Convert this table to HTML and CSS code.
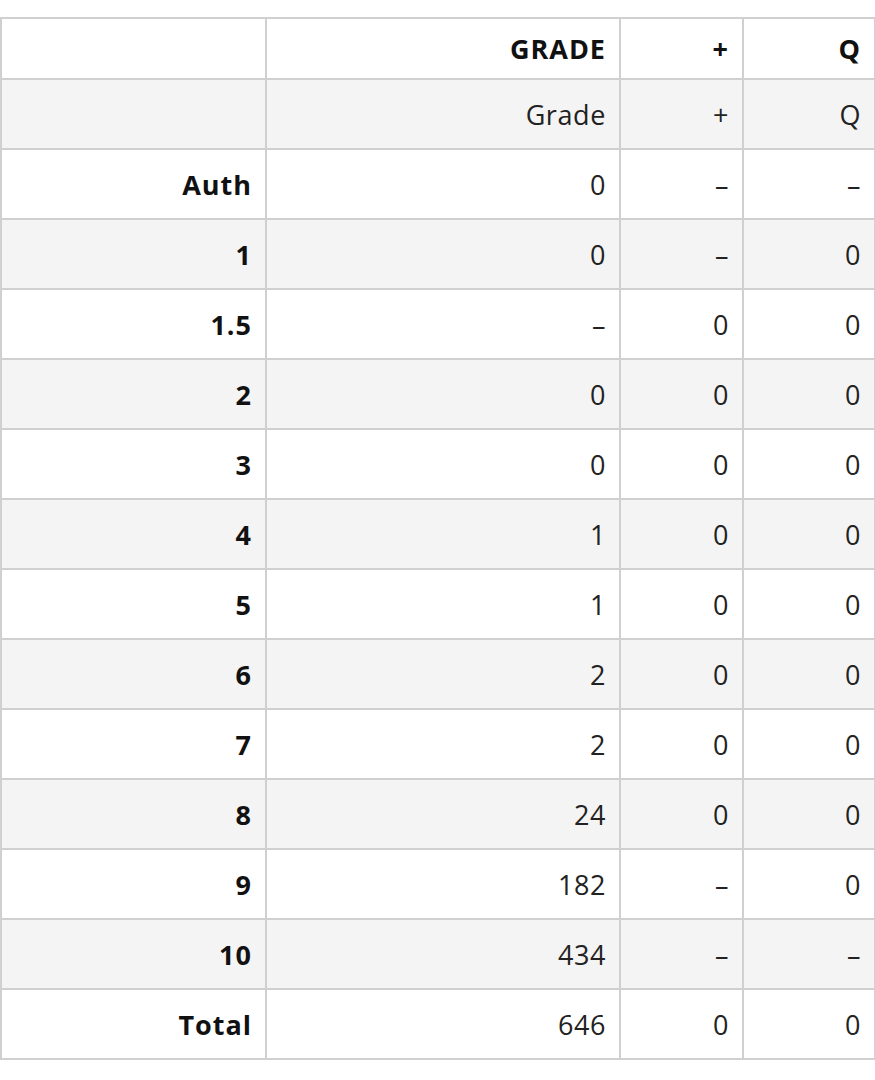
FILE: index.html
```html
<!DOCTYPE html>
<html>
<head>
<meta charset="utf-8">
<link rel="stylesheet" href="styles.css">
</head>
<body>
<table class="grid">
<colgroup><col class="c1"><col class="c2"><col class="c3"><col class="c4"></colgroup>
<thead>
<tr class="head"><th></th><th>GRADE</th><th>+</th><th>Q</th></tr>
</thead>
<tbody>
<tr class="alt"><th></th><td>Grade</td><td>+</td><td>Q</td></tr>
<tr><th>Auth</th><td>0</td><td>–</td><td>–</td></tr>
<tr class="alt"><th>1</th><td>0</td><td>–</td><td>0</td></tr>
<tr><th>1.5</th><td>–</td><td>0</td><td>0</td></tr>
<tr class="alt"><th>2</th><td>0</td><td>0</td><td>0</td></tr>
<tr><th>3</th><td>0</td><td>0</td><td>0</td></tr>
<tr class="alt"><th>4</th><td>1</td><td>0</td><td>0</td></tr>
<tr><th>5</th><td>1</td><td>0</td><td>0</td></tr>
<tr class="alt"><th>6</th><td>2</td><td>0</td><td>0</td></tr>
<tr><th>7</th><td>2</td><td>0</td><td>0</td></tr>
<tr class="alt"><th>8</th><td>24</td><td>0</td><td>0</td></tr>
<tr><th>9</th><td>182</td><td>–</td><td>0</td></tr>
<tr class="alt"><th>10</th><td>434</td><td>–</td><td>–</td></tr>
<tr><th>Total</th><td>646</td><td>0</td><td>0</td></tr>
</tbody>
</table>
</body>
</html>
```
FILE: styles.css
```css
html, body { margin: 0; padding: 0; background: #fff; }
body { padding-top: 17px; font-family: "Open Sans", "Liberation Sans", sans-serif; color: #1a1a1a; }
.grid { border-collapse: collapse; table-layout: fixed; width: 874px; }
.c1 { width: 265px; }
.c2 { width: 354px; }
.c3 { width: 123px; }
.c4 { width: 132px; }
.grid th, .grid td {
  border: 2px solid #d0d0d0;
  text-align: right;
  padding: 0 13px 0 0;
  font-size: 27px;
  letter-spacing: 0.6px;
  height: 70px;
  box-sizing: border-box;
}
.grid th { font-weight: 700; color: #111; letter-spacing: 1px; }
.grid td { font-weight: 400; color: #222; }
.grid .head th { height: 61px; }
.grid tr.alt th, .grid tr.alt td { background: #f4f4f4; }
```
